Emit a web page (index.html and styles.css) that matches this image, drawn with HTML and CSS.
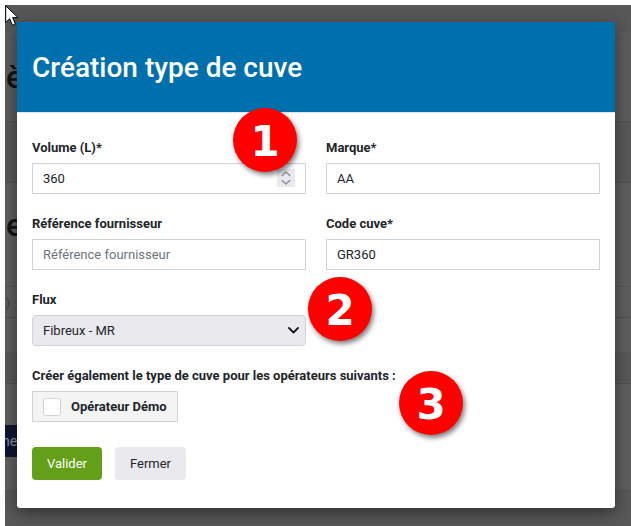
FILE: index.html
```html
<!DOCTYPE html>
<html lang="fr">
<head>
<meta charset="utf-8">
<title>Création type de cuve</title>
<link rel="stylesheet" href="styles.css">
</head>
<body>
<div class="screen">
  <div class="backdrop">
    <div class="bg-row bg-top"></div>
    <div class="bg-row bg-title"><span class="bg-heading">è</span></div>
    <div class="bg-row bg-band"></div>
    <div class="bg-row bg-section"><span class="bg-heading">e</span></div>
    <div class="bg-row bg-th"><span class="bg-small">.)</span></div>
    <div class="bg-row bg-plain3"></div>
    <div class="bg-row bg-band2"></div>
    <div class="bg-row bg-plain"></div>
    <div class="bg-action"><span>ner</span></div>
    <div class="bg-row bg-plain2"></div>
    <div class="bg-row bg-foot"></div>
  </div>
  <section class="modal">
    <header class="modal-head"><h1>Création type de cuve</h1></header>
    <form class="modal-body">
      <div class="grid">
        <div class="field">
          <label for="vol">Volume (L)*</label>
          <div class="number-wrap">
            <input id="vol" class="control" type="number" value="360">
            <span class="spin">
              <svg width="10" height="16" viewBox="0 0 10 16"><path d="M1.2 5.600 5 2l3.800 3.600M1.200 10.400 5 14l3.800-3.600" fill="none" stroke="#8b8f99" stroke-width="1.400" stroke-linecap="round" stroke-linejoin="round"/></svg>
            </span>
          </div>
        </div>
        <div class="field">
          <label for="marque">Marque*</label>
          <input id="marque" class="control" type="text" value="AA">
        </div>
        <div class="field">
          <label for="ref">Référence fournisseur</label>
          <input id="ref" class="control" type="text" placeholder="Référence fournisseur">
        </div>
        <div class="field">
          <label for="code">Code cuve*</label>
          <input id="code" class="control" type="text" value="GR360">
        </div>
        <div class="field">
          <label for="flux">Flux</label>
          <div class="select-wrap">
            <select id="flux" class="select"><option>Fibreux - MR</option></select>
            <svg class="chev" width="11" height="7" viewBox="0 0 11 7"><path d="M1 1 5.500 5.500 10 1" fill="none" stroke="#16181d" stroke-width="1.800" stroke-linecap="round" stroke-linejoin="round"/></svg>
          </div>
        </div>
      </div>
      <p class="ops-title">Créer également le type de cuve pour les opérateurs suivants :</p>
      <label class="op"><input type="checkbox"><span>Opérateur Démo</span></label>
      <div class="actions">
        <button type="button" class="btn btn-ok">Valider</button>
        <button type="button" class="btn btn-close">Fermer</button>
      </div>
    </form>
  </section>
  <span class="badge badge-1">1</span>
  <span class="badge badge-2">2</span>
  <span class="badge badge-3">3</span>
</div>
<svg class="cursor" width="14" height="22" viewBox="0 0 14 22"><path d="M.7.8v16.600l4-3.700 2.700 6.600 3-1.300-2.800-6.400h5.400z" fill="#fff" stroke="#000" stroke-width="1"/></svg>
</body>
</html>
```
FILE: styles.css
```css
* { box-sizing: border-box; }
html, body { margin: 0; height: 100%; background: #fff; overflow: hidden; }
body { font-family: Roboto, "Liberation Sans", sans-serif; color: #212529; }
.screen { position: relative; width: 631px; height: 526px; padding: 5px 0 0 5px; }
.backdrop { height: 521px; display: flex; flex-direction: column; background: #5e5e5e; overflow: hidden; }
.bg-row { flex: none; display: flex; align-items: center; overflow: hidden; }
.bg-top { height: 27px; background: #575757; }
.bg-title { height: 90px; background: #5c5c5c; border-bottom: 1px solid #525252; }
.bg-band { height: 61px; background: #585858; border-bottom: 1px solid #525252; }
.bg-section { height: 104px; background: #5e5e5e; border-bottom: 1px solid #545454; padding-bottom: 19px; }
.bg-th { height: 31px; background: #5e5e5e; border-bottom: 1px solid #525252; }
.bg-plain3 { height: 35px; background: #5e5e5e; border-bottom: 1px solid #565656; }
.bg-band2 { height: 31px; background: #585858; border-bottom: 1px solid #505050; }
.bg-plain { height: 41px; background: #5e5e5e; }
.bg-action { flex: none; height: 32px; width: 40px; background: #0c1530; color: #8a8f9c; font-size: 14px; display: flex; align-items: center; }
.bg-action span { margin-left: -3px; }
.bg-plain2 { height: 34px; background: #5e5e5e; border-bottom: 1px solid #525252; }
.bg-foot { height: 35px; background: #585858; }
.bg-heading { font-size: 32px; font-weight: 500; line-height: 1; color: #131313; margin-left: 1px; }
.bg-small { font-size: 13px; color: #3e3e3e; margin-left: -3px; }
.modal { position: absolute; left: 17px; top: 22px; width: 598px; height: 486px; background: #fff; border-radius: 0 0 3px 3px; box-shadow: 0 5px 16px rgba(0, 0, 0, .45); }
.modal-head { height: 91px; background: #0070ad; display: flex; align-items: center; padding: 2px 15px 0; border-bottom: 1px solid #e4e4e4; }
.modal-head h1 { margin: 0; font-size: 28px; font-weight: 500; color: #fff; line-height: 1; }
.modal-body { padding: 27px 15px 0; }
.grid { display: grid; grid-template-columns: 274px 274px; column-gap: 20px; row-gap: 22px; }
.field { display: flex; flex-direction: column; gap: 8px; }
.field label, .modal-body .ops-title { font-size: 13px; font-weight: 700; line-height: 15px; color: #212529; margin: 0; }
.control { display: block; height: 31px; width: 100%; border: 1px solid #ced4da; border-radius: 0; padding: 0 10px; font: 400 13px Roboto, sans-serif; color: #212529; background: #fff; outline: 0; appearance: textfield; }
.control::placeholder { color: #6c757d; opacity: 1; }
.number-wrap { position: relative; height: 31px; }
.spin { position: absolute; right: 11px; top: 6px; width: 18px; height: 18px; background: #e9e9ee; display: flex; align-items: center; justify-content: center; }
.select-wrap { position: relative; height: 31px; }
.select { appearance: none; width: 100%; height: 31px; border: 1px solid #ced4da; border-radius: 4px; background: #e9e9ee; padding: 0 10px; font: 400 13px Roboto, sans-serif; color: #212529; }
.chev { position: absolute; right: 7px; top: 12px; }
.modal-body .ops-title { margin-top: 22px; }
.op { margin-top: 8px; width: 146px; height: 31px; display: flex; align-items: center; gap: 10px; padding-left: 10px; background: #f4f4f5; border: 1px solid #ced4da; font-size: 13px; font-weight: 700; }
.op input { appearance: none; margin: 0; width: 18px; height: 18px; background: #fff; border: 1px solid #ced4da; border-radius: 3px; }
.actions { margin-top: 25px; display: flex; gap: 13px; }
.btn { height: 33px; border: 0; border-radius: 4px; font: 400 13px Roboto, sans-serif; padding: 0; }
.btn-ok { width: 70px; background: #639f18; color: #fff; }
.btn-close { width: 71px; background: #e9e9ee; color: #212529; }
.badge { position: absolute; width: 64px; height: 64px; border-radius: 50%; background: #fe0000; color: #fff; font: 700 42px/67px "DejaVu Sans", sans-serif; text-align: center; box-shadow: 2px 3px 5px rgba(0, 0, 0, .5); }
.badge-1 { left: 233px; top: 108px; }
.badge-2 { left: 308px; top: 277px; }
.badge-3 { left: 399px; top: 371px; }
.cursor { position: absolute; left: 5px; top: 5px; }
```
